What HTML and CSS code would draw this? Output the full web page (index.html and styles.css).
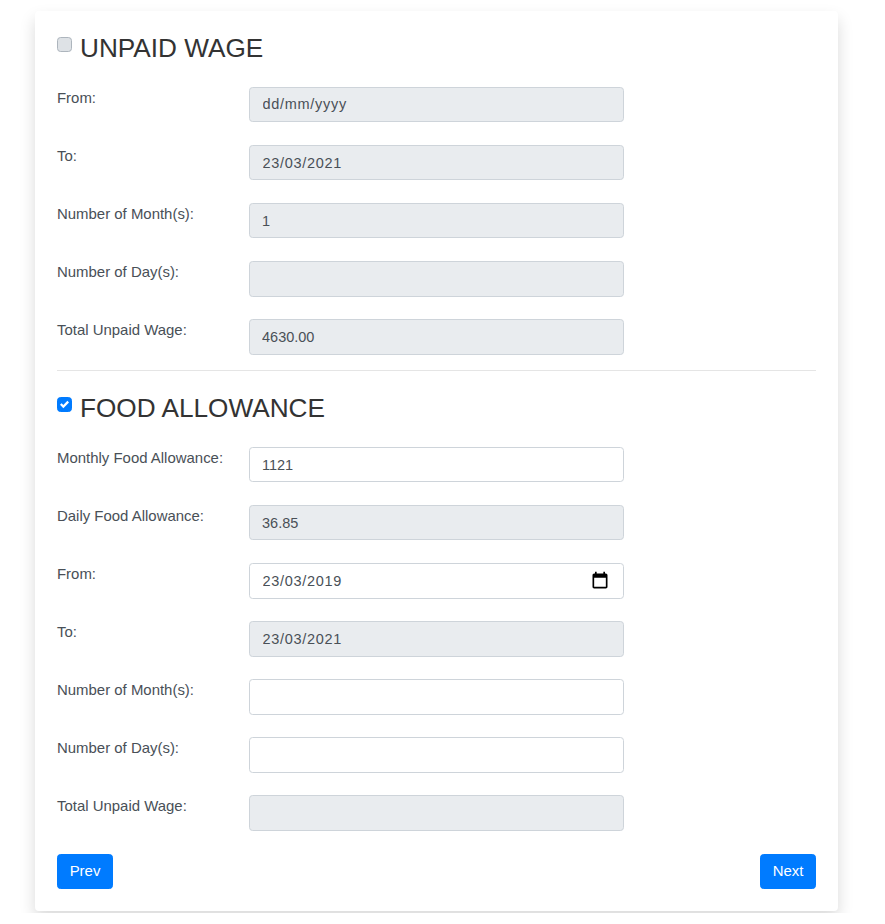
FILE: index.html
```html
<!DOCTYPE html>
<html lang="en">
<head>
<meta charset="utf-8">
<title>Wage form</title>
<link rel="stylesheet" href="styles.css">
</head>
<body>
<div class="page">
<main class="card">
  <section class="section">
    <h3 class="section-title">
      <span class="check"></span>
      UNPAID WAGE
    </h3>
    <div class="row"><label class="label">From:</label><input class="field field-date" type="text" value="dd/mm/yyyy" disabled></div>
    <div class="row"><label class="label">To:</label><input class="field field-date" type="text" value="23/03/2021" disabled></div>
    <div class="row"><label class="label">Number of Month(s):</label><input class="field" type="text" value="1" disabled></div>
    <div class="row"><label class="label">Number of Day(s):</label><input class="field" type="text" disabled></div>
    <div class="row"><label class="label">Total Unpaid Wage:</label><input class="field" type="text" value="4630.00" disabled></div>
  </section>
  <hr class="divider">
  <section class="section">
    <h3 class="section-title">
      <span class="check check-on">
        <svg viewBox="0 0 8 8" width="9" height="9"><path fill="#fff" d="M6.564.75l-3.59 3.612-1.538-1.55L0 4.26 2.974 7.25 8 2.193z"/></svg>
      </span>
      FOOD ALLOWANCE
    </h3>
    <div class="row"><label class="label">Monthly Food Allowance:</label><input class="field" type="text" value="1121"></div>
    <div class="row"><label class="label">Daily Food Allowance:</label><input class="field" type="text" value="36.85" disabled></div>
    <div class="row"><label class="label">From:</label>
      <div class="date-wrap">
        <input class="field field-date" type="text" value="23/03/2019">
        <svg class="cal-icon" viewBox="0 0 24 24" width="20" height="20"><path fill="#000" d="M19 3h-1V1h-2v2H8V1H6v2H5c-1.1 0-2 .9-2 2v14c0 1.1.9 2 2 2h14c1.1 0 2-.9 2-2V5c0-1.1-.9-2-2-2zm0 16H5V8h14v11z"/></svg>
      </div>
    </div>
    <div class="row"><label class="label">To:</label><input class="field field-date" type="text" value="23/03/2021" disabled></div>
    <div class="row"><label class="label">Number of Month(s):</label><input class="field" type="text"></div>
    <div class="row"><label class="label">Number of Day(s):</label><input class="field" type="text"></div>
    <div class="row"><label class="label">Total Unpaid Wage:</label><input class="field" type="text" disabled></div>
  </section>
  <div class="actions">
    <button class="btn" type="button">Prev</button>
    <button class="btn" type="button">Next</button>
  </div>
</main>
</div>
</body>
</html>
```
FILE: styles.css
```css
* { box-sizing: border-box; }
html, body { margin: 0; padding: 0; background: #fff; }
body {
  font-family: "Liberation Sans", Arial, sans-serif;
  font-size: 14.4px;
  line-height: 1.5;
  color: #495057;
}
.page {
  overflow: hidden;
  padding: 11px 47px 2px 35px;
}
.card {
  background: #fff;
  border-radius: 4px;
  box-shadow: 0 8px 16px rgba(0, 0, 0, .15);
  padding: 22.05px 22px 21.6px;
}
.section-title {
  display: flex;
  align-items: flex-start;
  gap: 8px;
  margin: 0 0 24px;
  height: 29.6px;
  font-size: 26.2px;
  font-weight: 400;
  line-height: 30px;
  color: #333;
}
.check {
  flex: none;
  width: 15px;
  height: 15px;
  margin-top: 4px;
  border: 1px solid #adb5bd;
  border-radius: 3.6px;
  background: #dee2e6;
  display: flex;
  align-items: center;
  justify-content: center;
}
.check-on { background: #007bff; border-color: #007bff; }
.row {
  display: flex;
  align-items: flex-start;
  margin-bottom: 22.5px;
}
.section .row:last-child { margin-bottom: 15.5px; }
.label {
  flex: none;
  width: 192px;
  font-size: 14.95px;
  line-height: 22px;
  color: #495057;
}
.field {
  display: block;
  width: 375px;
  height: 35.6px;
  padding: 6px 12px;
  border: 1px solid #ced4da;
  border-radius: 3.6px;
  background: #fff;
  font: inherit;
  font-size: 14.5px;
  color: #495057;
  outline: none;
}
.field:disabled { background: #e9ecef; opacity: 1; color: #495057; }
.field-date { letter-spacing: .7px; padding-left: 12.5px; }
.date-wrap { position: relative; width: 375px; }
.cal-icon { position: absolute; right: 14px; top: 8px; }
.divider { border: 0; border-top: 1px solid #e5e5e5; margin: 0 0 22.04px; }
.actions {
  display: flex;
  justify-content: space-between;
  margin-top: 22.8px;
}
.btn {
  width: 56px;
  height: 35.6px;
  padding: 0;
  border: 1px solid #007bff;
  border-radius: 3.6px;
  background: #007bff;
  color: #fff;
  font: inherit;
  font-size: 14.95px;
}
```
